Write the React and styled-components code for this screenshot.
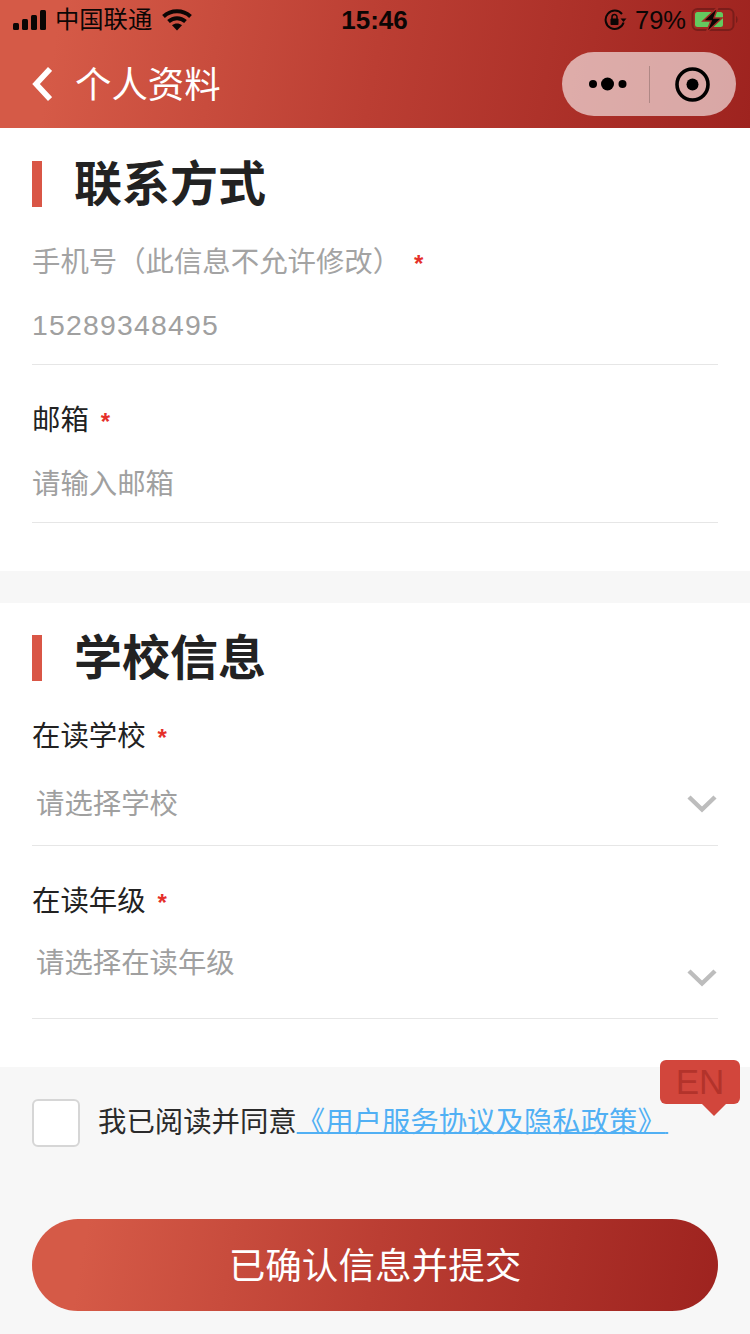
import React from "react";
import styled, { createGlobalStyle } from "styled-components";

const cjk = `"Liberation Sans", "Noto Sans CJK SC", sans-serif`;
const brand = `linear-gradient(100deg, #d55a47 8%, #bb3e33 50%, #9e231f 100%)`;

const GlobalStyle = createGlobalStyle`
  html, body {
    margin: 0;
    padding: 0;
    background: #f7f7f7;
    font-family: ${cjk};
  }
  * {
    box-sizing: border-box;
  }
`;

const Page = styled.div`
  position: relative;
  width: 750px;
  height: 1334px;
  overflow: hidden;
  background: #f7f7f7;
`;

const Header = styled.header`
  height: 128px;
  background: ${brand};
`;

const StatusBar = styled.div`
  height: 40px;
  padding: 0 12px 0 13px;
  display: grid;
  grid-template-columns: 1fr auto 1fr;
  align-items: center;
  color: #0b0605;
`;

const StatusLeft = styled.div`
  display: flex;
  align-items: center;
`;

const StatusRight = styled.div`
  display: flex;
  align-items: center;
  justify-content: flex-end;
`;

const Carrier = styled.span`
  font-size: 24.3px;
  line-height: 28px;
  margin: 0 10px 0 9px;
`;

const Clock = styled.span`
  font-size: 26px;
  font-weight: 700;
  margin-right: 2px;
`;

const Percent = styled.span`
  font-size: 25.5px;
  margin: 0 4px 0 8px;
`;

const NavBar = styled.div`
  height: 88px;
  padding: 0 14px 0 32px;
  display: flex;
  align-items: center;
`;

const NavTitle = styled.h1`
  margin: 4px 0 0 23px;
  font-size: 36.4px;
  font-weight: 400;
  color: #fff;
  line-height: 48px;
  flex: 1;
`;

const Capsule = styled.div`
  width: 174px;
  height: 64px;
  border-radius: 32px;
  background: rgba(255, 255, 255, 0.6);
  display: flex;
  align-items: center;
`;

const CapsuleDivider = styled.span`
  width: 1px;
  height: 37px;
  background: rgba(0, 0, 0, 0.2);
`;

const CapsuleSlot = styled.div`
  flex: none;
  width: ${(p) => p.$width}px;
  display: flex;
  align-items: center;
  justify-content: center;
  padding: 0 ${(p) => p.$right || 0}px 0 ${(p) => p.$left || 0}px;
`;

const Section = styled.section`
  background: #fff;
  padding: ${(p) => p.$top}px 32px 48px;
  margin-bottom: ${(p) => p.$gap || 0}px;
`;

const SectionTitle = styled.h2`
  margin: 0;
  height: 46px;
  display: flex;
  align-items: flex-start;
  font-size: 48px;
  line-height: 48px;
  font-weight: 700;
  color: #222;
  &::before {
    content: "";
    width: 10px;
    height: 46px;
    margin-right: 32px;
    background: #d95646;
  }
`;

const Field = styled.div`
  margin-top: 34px;
`;

const Label = styled.div`
  height: 40px;
  line-height: 42px;
  font-size: 28.4px;
  color: ${(p) => (p.$muted ? "#a3a3a3" : "#222")};
`;

const Star = styled.span`
  margin-left: ${(p) => p.$gap || 12}px;
  font-size: 24px;
  font-weight: 700;
  color: #e5302a;
`;

const ValueRow = styled.div`
  height: ${(p) => p.$height}px;
  padding-top: ${(p) => p.$pad}px;
  border-bottom: 1px solid #e6e6e6;
  box-sizing: content-box;
  display: flex;
  align-items: flex-start;
  justify-content: space-between;
`;

const Value = styled.span`
  line-height: 42px;
  height: 40px;
  font-size: 28.4px;
  color: #a0a0a0;
  padding-left: ${(p) => p.$indent || 0}px;
  letter-spacing: ${(p) => p.$spacing || 0}px;
`;

const Arrow = styled.svg`
  width: 30px;
  height: 20px;
  margin-top: ${(p) => p.$drop}px;
  margin-right: 1px;
`;

const Footer = styled.footer`
  padding: 32px 32px 23px;
`;

const Agreement = styled.div`
  display: flex;
  align-items: flex-start;
`;

const CheckBox = styled.span`
  width: 48px;
  height: 48px;
  flex: none;
  background: #fff;
  border: 2px solid #d6d6d6;
  border-radius: 6px;
`;

const AgreementText = styled.p`
  margin: 2px 0 0 18px;
  line-height: 42px;
  height: 40px;
  font-size: 28.4px;
  color: #2b2b2b;
`;

const AgreementLink = styled.a`
  color: #51b0f4;
  text-decoration: underline;
  text-decoration-thickness: 2px;
  text-underline-offset: 0;
`;

const Submit = styled.button`
  display: block;
  width: 686px;
  height: 92px;
  margin-top: 72px;
  padding: 0 0 4px;
  border: none;
  border-radius: 46px;
  background: ${brand};
  color: #fff;
  font-family: inherit;
  font-size: 36.6px;
`;

const LangBadge = styled.div`
  position: absolute;
  left: 660px;
  top: 1060px;
  width: 80px;
  height: 44px;
  border-radius: 6px;
  background: #d2463c;
  color: #b3332b;
  font-size: 35px;
  line-height: 44px;
  text-align: center;
  &::after {
    content: "";
    position: absolute;
    left: 42px;
    top: 44px;
    border-style: solid;
    border-width: 12px 12px 0;
    border-color: #d2463c transparent transparent;
  }
`;

const SignalIcon = () => (
  <svg width="33" height="20" viewBox="0 0 33 20">
    <rect x="0" y="13" width="6" height="7" rx="1.5" fill="currentColor" />
    <rect x="9" y="9" width="6" height="11" rx="1.5" fill="currentColor" />
    <rect x="18" y="5" width="6" height="15" rx="1.5" fill="currentColor" />
    <rect x="27" y="0" width="6" height="20" rx="1.5" fill="currentColor" />
  </svg>
);

const WifiIcon = () => (
  <svg width="30" height="22" viewBox="0 0 30 22" fill="none" stroke="currentColor" strokeWidth="4">
    <path d="M1.5 7.5C9 .6 21 .6 28.5 7.5" />
    <path d="M6.5 12.6c5-4.4 12-4.4 17 0" />
    <path d="M15 21.5l-5-5.2c3-2.4 7-2.4 10 0z" fill="currentColor" stroke="none" />
  </svg>
);

const RotationLockIcon = () => (
  <svg width="23" height="22" viewBox="0 0 23 22" fill="none">
    <path d="M19.6 13.5A9.2 9.2 0 1 1 18 5" stroke="currentColor" strokeWidth="2" />
    <path d="M16.5 9.5h6l-3 3.6z" fill="currentColor" />
    <rect x="6.5" y="9.5" width="8" height="6.5" rx="1" fill="currentColor" />
    <path d="M8 10V8a2.5 2.5 0 0 1 5 0v2" stroke="currentColor" strokeWidth="1.5" />
  </svg>
);

const BatteryIcon = () => (
  <svg width="48" height="30" viewBox="0 0 48 30" fill="none">
    <rect x="2.5" y="4" width="41" height="21" rx="5" stroke="#7a1d1a" strokeWidth="2" />
    <rect x="5" y="7" width="28" height="15" rx="2.5" fill="#64c95f" />
    <path d="M46 11c1.2.5 1.6 2 1.6 3.5s-.4 3-1.6 3.5z" fill="#7a1d1a" />
    <path d="M28 2L13 16h8l-5 12 16-15h-8z" fill="#0b0605" stroke="#a32a24" strokeWidth="1.5" />
  </svg>
);

const BackIcon = () => (
  <svg width="20" height="34" viewBox="0 0 20 34" fill="none" stroke="#fff" strokeWidth="5.5">
    <path d="M18 2L4 17l14 15" />
  </svg>
);

const MoreIcon = () => (
  <svg width="38" height="14" viewBox="0 0 38 14" fill="#000">
    <circle cx="4" cy="7" r="4" />
    <circle cx="18.5" cy="7" r="6.5" />
    <circle cx="33.5" cy="7" r="4" />
  </svg>
);

const TargetIcon = () => (
  <svg width="35" height="35" viewBox="0 0 35 35" fill="none">
    <circle cx="17.5" cy="17.5" r="15.5" stroke="#000" strokeWidth="3.6" />
    <circle cx="17.5" cy="17.5" r="6" fill="#000" />
  </svg>
);

const ChevronDown = ({ drop }) => (
  <Arrow $drop={drop} viewBox="0 0 30 20" fill="none" stroke="#bdbdbd" strokeWidth="4.5">
    <path d="M2 3l13 12.5L28 3" />
  </Arrow>
);

export default function App() {
  return (
    <Page>
      <GlobalStyle />
      <Header>
        <StatusBar>
          <StatusLeft>
            <SignalIcon />
            <Carrier>中国联通</Carrier>
            <WifiIcon />
          </StatusLeft>
          <Clock>15:46</Clock>
          <StatusRight>
            <RotationLockIcon />
            <Percent>79%</Percent>
            <BatteryIcon />
          </StatusRight>
        </StatusBar>
        <NavBar>
          <BackIcon />
          <NavTitle>个人资料</NavTitle>
          <Capsule>
            <CapsuleSlot $width={87} $left={4}>
              <MoreIcon />
            </CapsuleSlot>
            <CapsuleDivider />
            <CapsuleSlot $width={86} $right={2}>
              <TargetIcon />
            </CapsuleSlot>
          </Capsule>
        </NavBar>
      </Header>

      <Section $top={33} $gap={32}>
        <SectionTitle>联系方式</SectionTitle>
        <Field>
          <Label $muted>
            手机号（此信息不允许修改）
            <Star $gap={13}>*</Star>
          </Label>
          <ValueRow $height={60} $pad={23}>
            <Value $spacing={1.2}>15289348495</Value>
          </ValueRow>
        </Field>
        <Field>
          <Label>
            邮箱
            <Star>*</Star>
          </Label>
          <ValueRow $height={59} $pad={24}>
            <Value>请输入邮箱</Value>
          </ValueRow>
        </Field>
      </Section>

      <Section $top={32}>
        <SectionTitle>学校信息</SectionTitle>
        <Field>
          <Label>
            在读学校
            <Star>*</Star>
          </Label>
          <ValueRow $height={62} $pad={28}>
            <Value $indent={4}>请选择学校</Value>
            <ChevronDown drop={11} />
          </ValueRow>
        </Field>
        <Field>
          <Label>
            在读年级
            <Star>*</Star>
          </Label>
          <ValueRow $height={76} $pad={22}>
            <Value $indent={4}>请选择在读年级</Value>
            <ChevronDown drop={26} />
          </ValueRow>
        </Field>
      </Section>

      <Footer>
        <Agreement>
          <CheckBox />
          <AgreementText>
            我已阅读并同意
            <AgreementLink>《用户服务协议及隐私政策》{"\u200A"}</AgreementLink>
          </AgreementText>
        </Agreement>
        <Submit>已确认信息并提交</Submit>
      </Footer>

      <LangBadge>EN</LangBadge>
    </Page>
  );
}
